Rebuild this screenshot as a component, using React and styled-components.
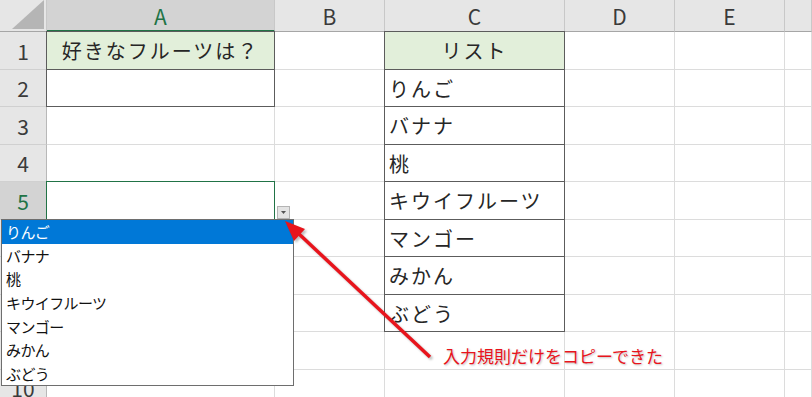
import React from 'react';
import styled, { createGlobalStyle, css } from 'styled-components';

const GlobalStyle = createGlobalStyle`
  html, body {
    margin: 0;
    padding: 0;
    background: #ffffff;
    overflow: hidden;
  }
  body {
    font-family: "Noto Sans CJK JP", "Noto Sans", sans-serif;
  }
`;

const COLS = ['A', 'B', 'C', 'D', 'E', ''];

const ROWS = [
  { A: { text: '好きなフルーツは？', fill: true, box: true, center: true }, C: { text: 'リスト', fill: true, box: true, center: true } },
  { A: { box: true }, C: { text: 'りんご', box: true } },
  { C: { text: 'バナナ', box: true } },
  { C: { text: '桃', box: true } },
  { A: { selected: true }, C: { text: 'キウイフルーツ', box: true } },
  { C: { text: 'マンゴー', box: true } },
  { C: { text: 'みかん', box: true } },
  { C: { text: 'ぶどう', box: true } },
  {},
  {},
];

const FRUITS = ['りんご', 'バナナ', '桃', 'キウイフルーツ', 'マンゴー', 'みかん', 'ぶどう'];

const App = () => {
  return (
    <>
      <GlobalStyle />
      <Page>
        <Sheet>
          <Corner>
            <CornerTriangle viewBox="0 0 32 29">
              <polygon points="0,29 32,0 32,29" fill="#b5b5b5" />
            </CornerTriangle>
          </Corner>
          {COLS.map((c, i) => (
            <ColHeader key={'h' + i} $active={c === 'A'}>
              {c}
            </ColHeader>
          ))}
          {ROWS.map((row, r) => (
            <React.Fragment key={r}>
              <RowHeader $active={r === 4}>{r + 1}</RowHeader>
              {COLS.map((c, i) => {
                const cell = row[c] || {};
                return (
                  <Cell
                    key={c + i}
                    $fill={cell.fill}
                    $box={cell.box}
                    $center={cell.center}
                    $selected={cell.selected}
                  >
                    {cell.text}
                  </Cell>
                );
              })}
            </React.Fragment>
          ))}
        </Sheet>

        <DropButton>
          <svg width="5" height="3" viewBox="0 0 5 3">
            <polygon points="0,0 5,0 2.5,3" fill="#555" />
          </svg>
        </DropButton>

        <DropList>
          {FRUITS.map((f, i) => (
            <DropItem key={f} $active={i === 0}>
              {f}
            </DropItem>
          ))}
        </DropList>

        <ArrowLayer width="812" height="397" viewBox="0 0 812 397">
          <defs>
            <filter id="soft" x="-20%" y="-20%" width="140%" height="140%">
              <feGaussianBlur stdDeviation="1.2" />
            </filter>
          </defs>
          <g transform="translate(2,2)" fill="rgba(0,0,0,0.25)" stroke="rgba(0,0,0,0.25)" filter="url(#soft)">
            <line x1="430" y1="357" x2="299" y2="234" strokeWidth="3.5" />
            <polygon points="285,221 305,229 294,241" stroke="none" />
          </g>
          <line x1="430" y1="357" x2="299" y2="234" stroke="#e8141c" strokeWidth="3.5" />
          <polygon points="285,221 305,229 294,241" fill="#e8141c" />
        </ArrowLayer>

        <Callout>入力規則だけをコピーできた</Callout>
      </Page>
    </>
  );
};

const Page = styled.div`
  position: relative;
  width: 812px;
  height: 397px;
  overflow: hidden;
  background: #ffffff;
`;

const Sheet = styled.div`
  display: grid;
  grid-template-columns: 47px 228px 110px 180px 110px 110px 1fr;
  grid-template-rows: 32px repeat(5, 38px 37px);
`;

const Corner = styled.div`
  background: #e6e6e6;
  border-right: 1px solid #c8c8c8;
  border-bottom: 1px solid #a6a6a6;
  box-sizing: border-box;
  display: flex;
  align-items: flex-end;
  justify-content: flex-end;
  padding: 0 2px 2px 0;
`;

const CornerTriangle = styled.svg`
  width: 32px;
  height: 29px;
  display: block;
`;

const ColHeader = styled.div`
  box-sizing: border-box;
  background: ${(p) => (p.$active ? '#d3d3d3' : '#e6e6e6')};
  color: ${(p) => (p.$active ? '#217346' : '#3a3a3a')};
  border-right: 1px solid #c8c8c8;
  border-bottom: ${(p) => (p.$active ? '2px solid #217346' : '1px solid #a6a6a6')};
  display: flex;
  align-items: center;
  justify-content: center;
  font-size: 21px;
  padding-top: 1px;
`;

const RowHeader = styled.div`
  box-sizing: border-box;
  background: ${(p) => (p.$active ? '#d3d3d3' : '#e6e6e6')};
  color: ${(p) => (p.$active ? '#217346' : '#3a3a3a')};
  border-right: 1px solid #b8b8b8;
  border-bottom: 1px solid #d0d0d0;
  display: flex;
  align-items: center;
  justify-content: center;
  font-size: 21px;
`;

const Cell = styled.div`
  position: relative;
  box-sizing: border-box;
  background: ${(p) => (p.$fill ? '#e2efda' : '#ffffff')};
  border-right: 1px solid #dcdcdc;
  border-bottom: 1px solid #dcdcdc;
  display: flex;
  align-items: center;
  justify-content: ${(p) => (p.$center ? 'center' : 'flex-start')};
  padding: 0 4px;
  font-size: 20px;
  letter-spacing: 2px;
  color: #262626;
  white-space: nowrap;

  ${(p) =>
    p.$box &&
    css`
      &::after {
        content: '';
        position: absolute;
        top: -1px;
        left: -1px;
        right: -1px;
        bottom: -1px;
        border: 1px solid #5c5c5c;
        pointer-events: none;
      }
    `}

  ${(p) =>
    p.$selected &&
    css`
      &::after {
        content: '';
        position: absolute;
        top: -1px;
        left: -1px;
        right: -1px;
        bottom: -1px;
        border: 1.5px solid #217346;
        pointer-events: none;
      }
    `}
`;

const DropButton = styled.div`
  position: absolute;
  left: 277px;
  top: 206px;
  width: 13px;
  height: 13px;
  box-sizing: border-box;
  background: #e4e4e4;
  border: 1px solid #b4b4b4;
  display: flex;
  align-items: center;
  justify-content: center;
`;

const DropList = styled.div`
  position: absolute;
  left: 1px;
  top: 219px;
  width: 293px;
  height: 167px;
  box-sizing: border-box;
  background: #ffffff;
  border: 1px solid #6e6e6e;
  display: flex;
  flex-direction: column;
`;

const DropItem = styled.div`
  height: 23.6px;
  display: flex;
  align-items: center;
  padding-left: 4px;
  font-size: 15px;
  letter-spacing: -0.6px;
  background: ${(p) => (p.$active ? '#0078d7' : 'transparent')};
  color: ${(p) => (p.$active ? '#ffffff' : '#111111')};
`;

const ArrowLayer = styled.svg`
  position: absolute;
  left: 0;
  top: 0;
  pointer-events: none;
`;

const Callout = styled.div`
  position: absolute;
  left: 443px;
  top: 343px;
  font-size: 17px;
  color: #e8141c;
  white-space: nowrap;
  text-shadow: 1px 1px 2px rgba(0, 0, 0, 0.25);
`;

export default App;
